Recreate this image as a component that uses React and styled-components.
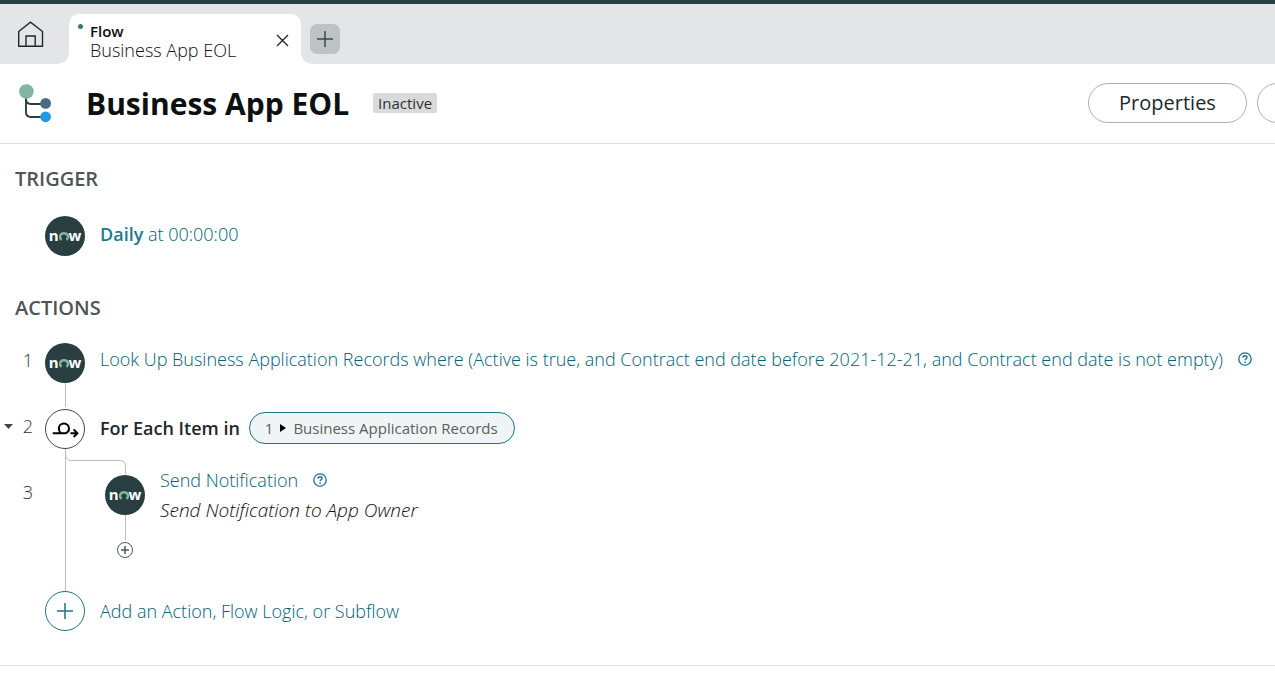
import React from "react";
import styled, { createGlobalStyle } from "styled-components";

const GlobalStyle = createGlobalStyle`
  *, *::before, *::after {
    box-sizing: border-box;
  }

  body {
    margin: 0;
    background: #fff;
    color: #0c1011;
    font-family: "Open Sans", "Noto Sans", sans-serif;
    font-size: 18px;
    font-weight: 300;
    line-height: 24px;
  }

  button {
    margin: 0;
    padding: 0;
    border: 0;
    background: none;
    color: inherit;
    font: inherit;
    cursor: pointer;
  }

  svg {
    display: block;
    flex: none;
  }
`;

const HomeIcon = () => (
  <svg width="26" height="27" viewBox="0 0 26 27" fill="none" stroke="#20282b" strokeWidth="1.4">
    <path d="M0.7 10.5 L12.5 1.2 L24.5 10.5 V25.3 H0.7 Z" />
    <path d="M8 25.3 V15 H17.2 V25.3" />
  </svg>
);

const CloseIcon = () => (
  <svg width="13" height="13" viewBox="0 0 13 13" stroke="#20282b" strokeWidth="1.4">
    <path d="M1 1 L12 12 M12 1 L1 12" />
  </svg>
);

const PlusIcon = ({ size = 16, color = "#3d4748", weight = 1.5 }) => (
  <svg width={size} height={size} viewBox="0 0 16 16" stroke={color} strokeWidth={weight}>
    <path d="M8 0 V16 M0 8 H16" />
  </svg>
);

const FlowIcon = () => (
  <svg width="33" height="39" viewBox="0 0 33 39" fill="none">
    <path
      d="M7 10 V28 Q7 33 12 33 H24 M7 15 Q7 20 12 20 H24"
      stroke="#293e40"
      strokeWidth="1.9"
    />
    <circle cx="7.4" cy="7.5" r="7.3" fill="#81b5a1" />
    <circle cx="26.6" cy="19.4" r="5.4" fill="#4a6a83" />
    <circle cx="26.6" cy="32.8" r="5.4" fill="#1f9ddf" />
  </svg>
);

const LoopIcon = () => (
  <svg width="28" height="18" viewBox="0 0 28 18" fill="none" stroke="#000" strokeWidth="2">
    <path
      strokeLinecap="round"
      strokeLinejoin="round"
      d="M2.5 13.2 H14.6 C16.8 12.6 18 10.6 18 8.6 C18 5.6 15.7 3.4 12.9 3.4 C10.1 3.4 7.8 5.6 7.8 8.4 C7.8 10.2 8.6 11.8 9.8 12.8"
    />
    <path d="M19.4 13.2 H26.2 M22.6 9.4 L26.4 13.2 L22.6 17" />
  </svg>
);

const HelpIcon = () => (
  <svg width="14" height="14" viewBox="0 0 14 14" fill="none" stroke="#1b7587">
    <circle cx="7" cy="7" r="6.2" strokeWidth="1.3" />
    <path d="M5 5.7 C5 4.4 5.9 3.7 7 3.7 C8.2 3.7 9 4.4 9 5.4 C9 6.7 7.1 6.8 7.1 8.3" strokeWidth="1.4" />
    <path d="M7.1 9.5 V11" strokeWidth="1.5" />
  </svg>
);

const BranchIcon = () => (
  <svg width="62" height="26" viewBox="0 0 62 26" fill="none" stroke="#b9bdc0">
    <path d="M0.5 0 V26" />
    <path d="M0.5 5 Q0.5 11.5 6.5 11.5 H54.5 Q60.5 11.5 60.5 17.5 V25" />
  </svg>
);

const NowBadge = () => (
  <Badge role="img" aria-label="now">
    n
    <svg width="10" height="9" viewBox="0 0 10 9" fill="none" stroke="#81b5a1" strokeWidth="2.4">
      <path d="M2.6 7.9 C-0.4 5.3 1.3 1.3 5 1.3 C8.7 1.3 10.4 5.3 7.4 7.9" />
    </svg>
    w
  </Badge>
);

const Help = () => (
  <HelpButton type="button" aria-label="Help">
    <HelpIcon />
  </HelpButton>
);

const App = () => {
  return (
    <>
      <GlobalStyle />
      <TabStrip>
        <HomeButton type="button" aria-label="Home">
          <HomeIcon />
        </HomeButton>
        <Tab>
          <Dot />
          <TabText>
            <TabKind>Flow</TabKind>
            <span>Business App EOL</span>
          </TabText>
          <CloseButton type="button" aria-label="Close tab">
            <CloseIcon />
          </CloseButton>
        </Tab>
        <NewTab type="button" aria-label="New tab">
          <PlusIcon />
        </NewTab>
      </TabStrip>

      <Header>
        <FlowIcon />
        <Title>Business App EOL</Title>
        <Status>Inactive</Status>
        <HeaderButtons>
          <PillButton type="button">Properties</PillButton>
          <PillButton type="button" aria-label="More" />
        </HeaderButtons>
      </Header>

      <Main>
        <Heading>Trigger</Heading>
        <Step>
          <Gutter />
          <NowBadge />
          <StepBody>
            <StepLink href="#trigger">
              <Strong>Daily</Strong> at 00:00:00
            </StepLink>
          </StepBody>
        </Step>

        <Heading $later>Actions</Heading>
        <Step>
          <Gutter>1</Gutter>
          <Rail>
            <NowBadge />
            <Line $length={24} />
          </Rail>
          <StepBody $height={32}>
            <StepLink href="#lookup">
              Look Up Business Application Records where (Active is true, and
              Contract end date before 2021-12-21, and Contract end date is not
              empty)
            </StepLink>
            <Help />
          </StepBody>
        </Step>
        <Step>
          <Gutter>
            <Toggle type="button" aria-label="Collapse">
              <svg width="9" height="5" viewBox="0 0 9 5">
                <path d="M0 0 H9 L4.5 5 Z" fill="#3d4748" />
              </svg>
            </Toggle>
            2
          </Gutter>
          <Rail>
            <Circle $color="#3d4748">
              <LoopIcon />
            </Circle>
            <BranchIcon />
          </Rail>
          <StepBody $height={38}>
            <Strong>For Each Item in</Strong>
            <DataPill>
              1
              <svg width="6" height="8" viewBox="0 0 6 8">
                <path d="M0 0 L6 4 L0 8 Z" fill="#000" />
              </svg>
              Business Application Records
            </DataPill>
          </StepBody>
        </Step>
        <Step>
          <Gutter>3</Gutter>
          <Rail $nested>
            <Line $fill />
          </Rail>
          <Rail>
            <NowBadge />
            <Line $length={25} />
            <AddButton type="button" aria-label="Add inside loop">
              <PlusIcon size={8} color="#4d5a5e" weight={3} />
            </AddButton>
          </Rail>
          <StepNotes>
            <StepTitle>
              <StepLink href="#notify">Send Notification</StepLink>
              <Help />
            </StepTitle>
            <Note>Send Notification to App Owner</Note>
          </StepNotes>
        </Step>
        <Step>
          <Gutter />
          <AddStep type="button">
            <Circle $color="#1b7587">
              <PlusIcon color="#1b7587" />
            </Circle>
            Add an Action, Flow Logic, or Subflow
          </AddStep>
        </Step>
      </Main>
    </>
  );
};

// Styled Components
const TabStrip = styled.nav`
  display: flex;
  align-items: flex-end;
  height: 64px;
  border-top: 4px solid #293e40;
  background: #e4e5e7;
`;

const HomeButton = styled.button`
  margin: 0 25px 16px 18px;
`;

const Tab = styled.div`
  position: relative;
  display: flex;
  align-items: center;
  width: 232px;
  height: 50px;
  padding: 0 12px 0 21px;
  border-radius: 10px 10px 0 0;
  background: #fff;

  &::before,
  &::after {
    content: "";
    position: absolute;
    bottom: 0;
    width: 10px;
    height: 10px;
  }

  &::before {
    right: 100%;
    background: radial-gradient(circle at 0 0, transparent 9px, #fff 10px);
  }

  &::after {
    left: 100%;
    background: radial-gradient(circle at 100% 0, transparent 9px, #fff 10px);
  }
`;

const Dot = styled.span`
  position: absolute;
  top: 10px;
  left: 9px;
  width: 5px;
  height: 5px;
  border-radius: 50%;
  background: #2e8068;
`;

const TabText = styled.div`
  display: flex;
  flex: 1;
  flex-direction: column;
  padding-top: 4px;
  line-height: 19px;
`;

const TabKind = styled.span`
  font-size: 15px;
  font-weight: 600;
`;

const CloseButton = styled.button`
  padding-top: 3px;
`;

const NewTab = styled.button`
  display: flex;
  align-items: center;
  justify-content: center;
  width: 30px;
  height: 30px;
  margin: 0 0 10px 9px;
  border-radius: 7px;
  background: #bdc3c5;
`;

const Header = styled.header`
  display: flex;
  align-items: center;
  height: 80px;
  padding: 0 0 1px 19px;
  border-bottom: 1px solid #e0e2e3;
  overflow: hidden;
`;

const Title = styled.h1`
  margin: 0 24px 0 34px;
  padding-top: 2px;
  font-size: 30px;
  font-weight: 700;
  line-height: 40px;
`;

const Status = styled.span`
  padding: 0 5px;
  border-radius: 2px;
  background: #dadada;
  color: #2c3234;
  font-size: 15px;
  font-weight: 400;
  line-height: 20px;
`;

const HeaderButtons = styled.div`
  display: flex;
  gap: 10px;
  margin-left: auto;
  margin-right: -141px;
`;

const PillButton = styled.button`
  width: 159px;
  height: 40px;
  border: 1px solid #a9b1b3;
  border-radius: 20px;
  color: #20282b;
  font-size: 20px;
  font-weight: 400;
`;

const Main = styled.main`
  padding: 23px 0 34px;
  border-bottom: 1px solid #e0e2e3;
`;

const Heading = styled.h2`
  margin: ${({ $later }) => ($later ? "40px 0 23px 15px" : "0 0 25px 15px")};
  color: #505557;
  font-size: 20px;
  font-weight: 600;
  line-height: 24px;
  text-transform: uppercase;
`;

const Step = styled.div`
  display: flex;
`;

const Gutter = styled.div`
  display: flex;
  flex: none;
  align-items: center;
  justify-content: flex-end;
  width: 45px;
  height: 34px;
  padding-right: 12px;
  color: #2c3638;
`;

const Toggle = styled.button`
  margin-right: 10px;
`;

const Rail = styled.div`
  flex: none;
  width: ${({ $nested }) => ($nested ? "60px" : "40px")};

  > svg {
    margin-left: 20px;
  }
`;

const Line = styled.div`
  width: 1px;
  height: ${({ $fill, $length }) => ($fill ? "100%" : `${$length}px`)};
  margin: 0 0 2px 20px;
  background: #b9bdc0;
`;

const Badge = styled.div`
  display: flex;
  flex: none;
  align-items: center;
  justify-content: center;
  width: 40px;
  height: 40px;
  padding-bottom: 2px;
  border-radius: 50%;
  background: #293e40;
  color: #fff;
  font-family: "Open Sans", sans-serif;
  font-size: 15px;
  font-weight: 700;
  line-height: 16px;

  svg {
    margin-top: 3px;
  }
`;

const Circle = styled.span`
  display: flex;
  flex: none;
  align-items: center;
  justify-content: center;
  width: 40px;
  height: 40px;
  border: 1px solid ${({ $color }) => $color};
  border-radius: 50%;
`;

const StepBody = styled.div`
  display: flex;
  align-items: center;
  height: ${({ $height = 36 }) => $height}px;
  margin-left: 15px;
  white-space: nowrap;
`;

const StepLink = styled.a`
  color: #006277;
  text-decoration: none;

  strong {
    color: #1f7891;
  }
`;

const HelpButton = styled.button`
  margin-left: 15px;
`;

const Strong = styled.strong`
  color: #20282b;
  font-weight: 600;
`;

const DataPill = styled.span`
  display: flex;
  align-items: center;
  gap: 7px;
  height: 32px;
  margin-left: 9px;
  padding: 0 16px 0 15px;
  border: 1px solid #1b7587;
  border-radius: 16px;
  background: #f0f4f5;
  color: #566164;
  font-size: 15px;
  font-weight: 400;
`;

const StepNotes = styled.div`
  min-height: 116px;
  margin-left: 15px;
`;

const StepTitle = styled.div`
  display: flex;
  align-items: center;
  margin: -7px 0 6px;
`;

const Note = styled.div`
  font-size: 19px;
  font-style: italic;
`;

const AddButton = styled.button`
  display: flex;
  align-items: center;
  justify-content: center;
  width: 16px;
  height: 16px;
  margin-left: 12px;
  border: 1px solid #4d5a5e;
  border-radius: 50%;
`;

const AddStep = styled.button`
  display: flex;
  align-items: center;
  gap: 15px;
  color: #006277;
`;

export default App;
